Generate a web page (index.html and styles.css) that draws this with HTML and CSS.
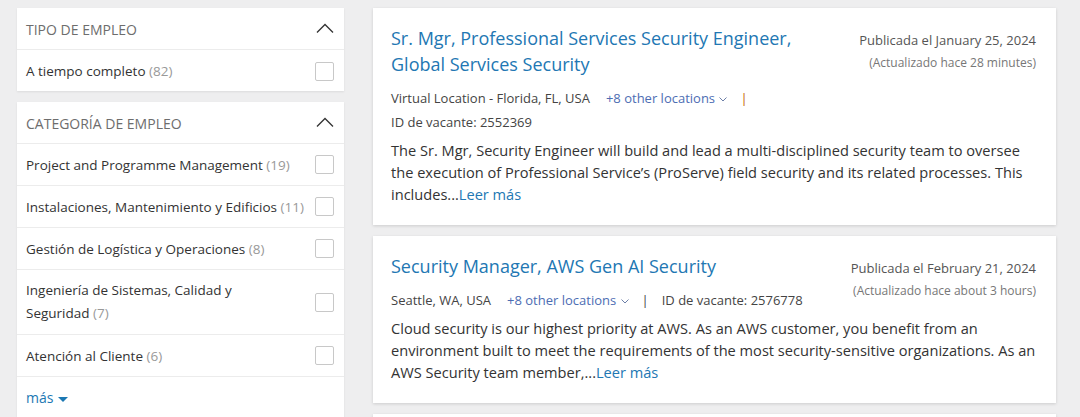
FILE: index.html
```html
<!DOCTYPE html>
<html lang="es">
<head>
    <meta charset="UTF-8">
    <meta name="viewport" content="width=device-width, initial-scale=1.0">
    <title>Empleos</title>
    <link rel="stylesheet" href="styles.css">
</head>
<body>
    <div class="page">
        <aside class="filters">
            <section class="filter-box">
                <div class="filter-head">
                    <span>Tipo de empleo</span>
                    <svg class="chev" width="18" height="10" viewBox="0 0 18 10"><polyline points="1,9.5 9,1.5 17,9.5" fill="none" stroke="#333" stroke-width="1.3"/></svg>
                </div>
                <label class="filter-row">
                    <span>A tiempo completo <em>(82)</em></span>
                    <span class="check"></span>
                </label>
            </section>

            <section class="filter-box">
                <div class="filter-head">
                    <span>Categoría de empleo</span>
                    <svg class="chev" width="18" height="10" viewBox="0 0 18 10"><polyline points="1,9.5 9,1.5 17,9.5" fill="none" stroke="#333" stroke-width="1.3"/></svg>
                </div>
                <label class="filter-row">
                    <span>Project and Programme Management <em>(19)</em></span>
                    <span class="check"></span>
                </label>
                <label class="filter-row">
                    <span>Instalaciones, Mantenimiento y Edificios <em>(11)</em></span>
                    <span class="check"></span>
                </label>
                <label class="filter-row">
                    <span>Gestión de Logística y Operaciones <em>(8)</em></span>
                    <span class="check"></span>
                </label>
                <label class="filter-row tall">
                    <span>Ingeniería de Sistemas, Calidad y<br>Seguridad <em>(7)</em></span>
                    <span class="check"></span>
                </label>
                <label class="filter-row">
                    <span>Atención al Cliente <em>(6)</em></span>
                    <span class="check"></span>
                </label>
                <a class="more" href="#">más <span class="caret"></span></a>
            </section>
        </aside>

        <main class="jobs">
            <article class="job">
                <div class="job-top">
                    <div class="job-main">
                        <a class="job-title" href="#">Sr. Mgr, Professional Services Security Engineer, Global Services Security</a>
                        <div class="job-meta">
                            <span>Virtual Location - Florida, FL, USA</span>
                            <a class="locs" href="#">+8 other locations <svg width="8" height="5" viewBox="0 0 8 5"><polyline points="0.5,0.5 4,4 7.5,0.5" fill="none" stroke="#6c7fa8" stroke-width="1"/></svg></a>
                            <span class="sep orange">|</span>
                            <span>ID de vacante: 2552369</span>
                        </div>
                    </div>
                    <div class="job-date">
                        <div class="posted">Publicada el January 25, 2024</div>
                        <div class="updated">(Actualizado hace 28 minutes)</div>
                    </div>
                </div>
                <p class="job-desc">The Sr. Mgr, Security Engineer will build and lead a multi-disciplined security team to oversee the execution of Professional Service’s (ProServe) field security and its related processes. This includes...<a href="#">Leer más</a></p>
            </article>

            <article class="job">
                <div class="job-top">
                    <div class="job-main">
                        <a class="job-title" href="#">Security Manager, AWS Gen AI Security</a>
                        <div class="job-meta">
                            <span>Seattle, WA, USA</span>
                            <a class="locs" href="#">+8 other locations <svg width="8" height="5" viewBox="0 0 8 5"><polyline points="0.5,0.5 4,4 7.5,0.5" fill="none" stroke="#6c7fa8" stroke-width="1"/></svg></a>
                            <span class="sep">|</span>
                            <span>ID de vacante: 2576778</span>
                        </div>
                    </div>
                    <div class="job-date">
                        <div class="posted">Publicada el February 21, 2024</div>
                        <div class="updated">(Actualizado hace about 3 hours)</div>
                    </div>
                </div>
                <p class="job-desc">Cloud security is our highest priority at AWS. As an AWS customer, you benefit from an environment built to meet the requirements of the most security-sensitive organizations. As an AWS Security team member,...<a href="#">Leer más</a></p>
            </article>

            <article class="job"></article>
        </main>
    </div>
</body>
</html>
```

FILE: styles.css
```css
body {
    margin: 0;
    background: #eeeeef;
    font-family: "Open Sans", Arial, sans-serif;
    color: #333;
}
a {
    text-decoration: none;
}
.page {
    display: flex;
    align-items: flex-start;
    gap: 29px;
    padding: 8px 24px 0 17px;
}
.filters {
    width: 327px;
    flex-shrink: 0;
    display: flex;
    flex-direction: column;
    gap: 11px;
}
.filter-box {
    background: #fff;
    box-shadow: 0 1px 2px rgba(0,0,0,0.08);
}
.filter-head {
    display: flex;
    justify-content: space-between;
    align-items: center;
    height: 40px;
    padding: 1px 10px 0 9px;
    border-bottom: 1px solid #ececec;
    font-size: 14px;
    text-transform: uppercase;
    color: #6d6d6d;
}
.filter-box:first-child .filter-row {
    min-height: 40px;
    border-bottom: 0;
    padding-top: 1px;
}
.chev {
    margin-top: -2px;
}
.filter-row {
    display: flex;
    justify-content: space-between;
    align-items: center;
    min-height: 41px;
    padding: 0 10px 0 9px;
    border-bottom: 1px solid #ececec;
    font-size: 13.5px;
    color: #333;
}
.filter-row.tall {
    min-height: 64px;
    line-height: 23px;
}
.filter-row em {
    font-style: normal;
    color: #999;
}
.check {
    width: 17px;
    height: 17px;
    border: 1px solid #c8c8c8;
    border-radius: 2px;
    flex-shrink: 0;
}
.more {
    display: block;
    padding: 11px 9px 12px;
    font-size: 14px;
    color: #1b78b3;
}
.caret {
    display: inline-block;
    width: 0;
    height: 0;
    border-left: 5px solid transparent;
    border-right: 5px solid transparent;
    border-top: 5px solid #1b78b3;
    vertical-align: middle;
    margin-left: 1px;
}
.jobs {
    width: 683px;
    display: flex;
    flex-direction: column;
    gap: 11px;
}
.job {
    background: #fff;
    box-shadow: 0 1px 3px rgba(0,0,0,0.14);
    padding: 17px 20px 20px 18px;
}
.job-top {
    display: flex;
    justify-content: space-between;
    gap: 40px;
}
.job-main {
    flex: 1;
}
.job-title {
    display: block;
    font-size: 18px;
    line-height: 26px;
    color: #2277b3;
    margin-bottom: 9px;
}
.job-meta {
    display: flex;
    flex-wrap: wrap;
    align-items: center;
    column-gap: 16px;
    font-size: 13px;
    line-height: 24px;
    color: #444;
}
.locs {
    color: #4d6db3;
}
.locs svg {
    vertical-align: middle;
    margin-left: 1px;
}
.sep {
    color: #444;
    margin: 0 -3px;
}
.sep.orange {
    color: #c45f00;
}
.job-date {
    text-align: right;
    white-space: nowrap;
    padding-top: 3px;
}
.posted {
    font-size: 13px;
    line-height: 24px;
    color: #555;
}
.updated {
    font-size: 12px;
    line-height: 22px;
    color: #777;
}
.job-desc {
    margin: 5px 0 0;
    font-size: 14.6px;
    line-height: 22px;
    color: #333;
}
.job-desc a {
    color: #2277b3;
}
```
